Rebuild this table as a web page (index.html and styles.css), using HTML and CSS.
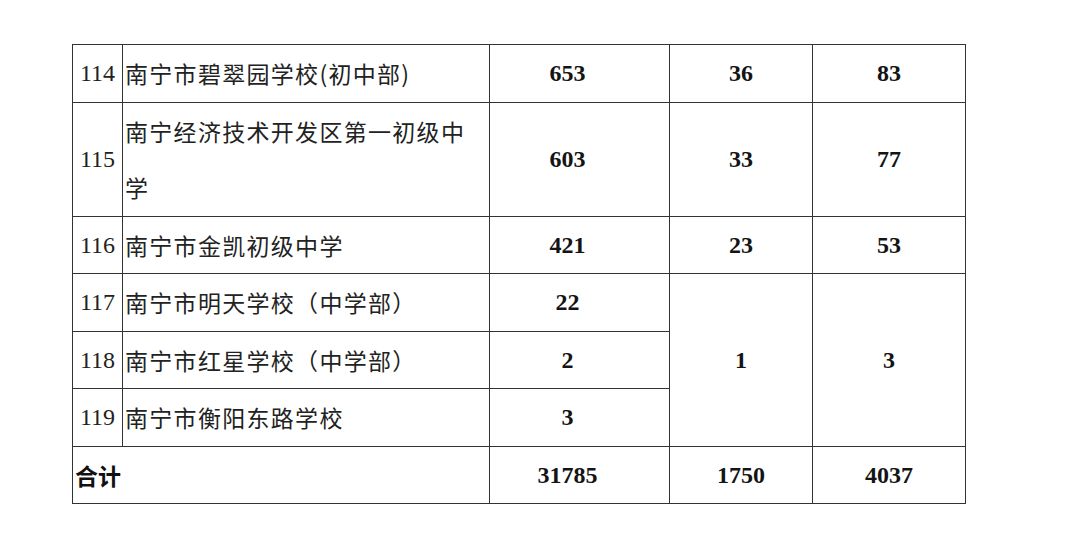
FILE: index.html
```html
<!DOCTYPE html>
<html lang="zh-CN">
<head>
<meta charset="utf-8">
<title>南宁市学校名额分配表</title>
<link rel="stylesheet" href="styles.css">
</head>
<body>
<div class="page">
  <table class="quota">
    <colgroup>
      <col class="c-idx">
      <col class="c-name">
      <col class="c-a">
      <col class="c-b">
      <col class="c-c">
    </colgroup>
    <tbody>
      <tr>
        <td class="idx">114</td>
        <td class="name">南宁市碧翠园学校(初中部)</td>
        <td class="num first">653</td>
        <td class="num">36</td>
        <td class="num">83</td>
      </tr>
      <tr>
        <td class="idx">115</td>
        <td class="name">南宁经济技术开发区第一初级中学</td>
        <td class="num first">603</td>
        <td class="num">33</td>
        <td class="num">77</td>
      </tr>
      <tr>
        <td class="idx">116</td>
        <td class="name">南宁市金凯初级中学</td>
        <td class="num first">421</td>
        <td class="num">23</td>
        <td class="num">53</td>
      </tr>
      <tr>
        <td class="idx">117</td>
        <td class="name">南宁市明天学校（中学部）</td>
        <td class="num first">22</td>
        <td class="num" rowspan="3">1</td>
        <td class="num" rowspan="3">3</td>
      </tr>
      <tr>
        <td class="idx">118</td>
        <td class="name">南宁市红星学校（中学部）</td>
        <td class="num first">2</td>
      </tr>
      <tr>
        <td class="idx">119</td>
        <td class="name">南宁市衡阳东路学校</td>
        <td class="num first">3</td>
      </tr>
      <tr>
        <td class="total" colspan="2">合计</td>
        <td class="num first">31785</td>
        <td class="num">1750</td>
        <td class="num">4037</td>
      </tr>
    </tbody>
  </table>
</div>
</body>
</html>
```

FILE: styles.css
```css
html, body {
  margin: 0;
  padding: 0;
  background: #ffffff;
}

.page {
  padding: 44px 0 0 72px;
}

.quota {
  border-collapse: collapse;
  table-layout: fixed;
  width: 893px;
  color: #1a1a1a;
}

.c-idx { width: 50px; }
.c-name { width: 367px; }
.c-a { width: 180px; }
.c-b { width: 143px; }
.c-c { width: 153px; }

.quota td {
  border: 1px solid #333333;
  padding: 0;
  line-height: 56.5px;
  height: 56.5px;
  vertical-align: middle;
}

.idx {
  text-align: center;
  font-family: "Liberation Serif", "Times New Roman", serif;
  font-size: 24px;
  color: #222222;
}

.name {
  font-family: "Noto Sans CJK SC", sans-serif;
  font-size: 23px;
  letter-spacing: 1.3px;
  color: #222222;
  padding: 0 12px 0 2px !important;
  word-break: break-all;
}

.num {
  text-align: center;
  font-family: "Liberation Serif", "Times New Roman", serif;
  font-weight: 700;
  font-size: 24px;
  color: #141414;
}

.quota td.first {
  padding-right: 24px;
}

.total {
  font-family: "Noto Sans CJK SC", sans-serif;
  font-weight: 700;
  font-size: 23px;
  color: #111111;
  padding-left: 2px !important;
}
```
